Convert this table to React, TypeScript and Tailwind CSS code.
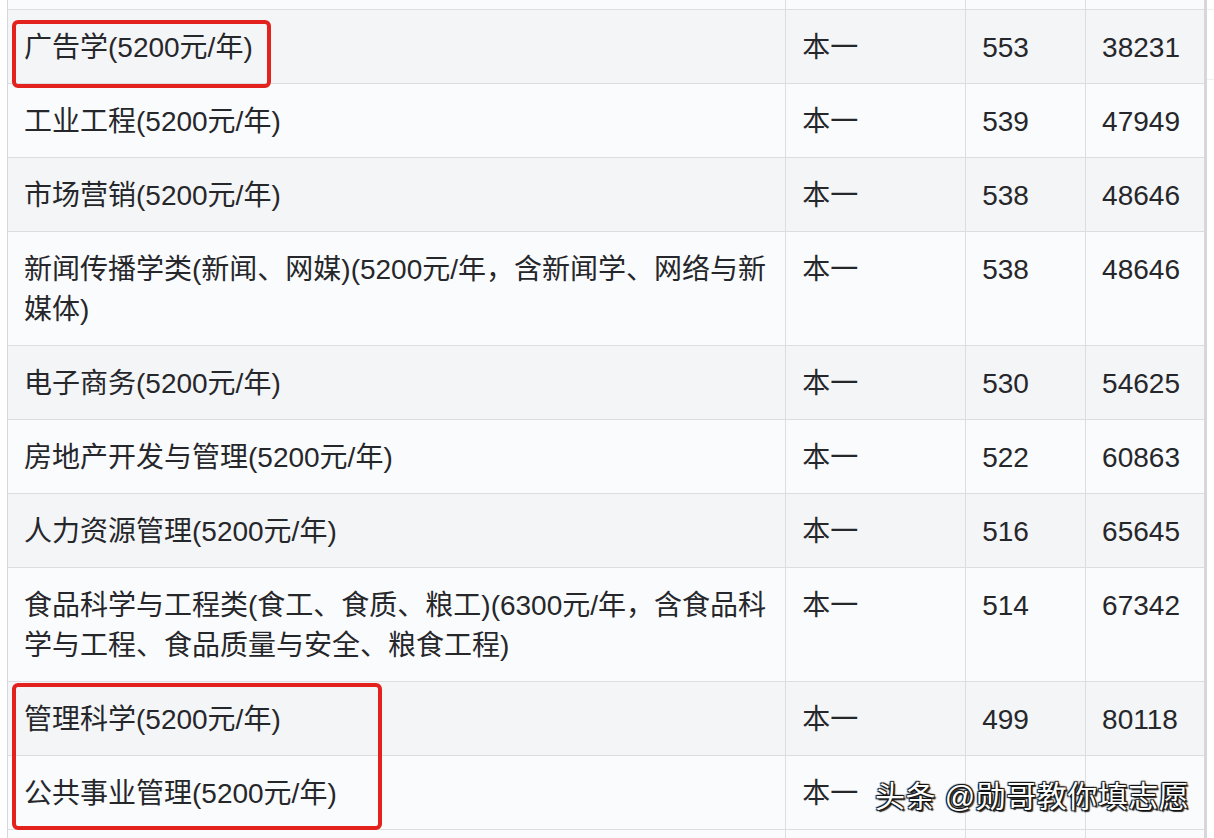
import React from 'react'

type Row = { name: string; batch: string; score: string; rank: string }

const rows: Row[] = [
  { name: '广告学(5200元/年)', batch: '本一', score: '553', rank: '38231' },
  { name: '工业工程(5200元/年)', batch: '本一', score: '539', rank: '47949' },
  { name: '市场营销(5200元/年)', batch: '本一', score: '538', rank: '48646' },
  { name: '新闻传播学类(新闻、网媒)(5200元/年，含新闻学、网络与新媒体)', batch: '本一', score: '538', rank: '48646' },
  { name: '电子商务(5200元/年)', batch: '本一', score: '530', rank: '54625' },
  { name: '房地产开发与管理(5200元/年)', batch: '本一', score: '522', rank: '60863' },
  { name: '人力资源管理(5200元/年)', batch: '本一', score: '516', rank: '65645' },
  { name: '食品科学与工程类(食工、食质、粮工)(6300元/年，含食品科学与工程、食品质量与安全、粮食工程)', batch: '本一', score: '514', rank: '67342' },
  { name: '管理科学(5200元/年)', batch: '本一', score: '499', rank: '80118' },
  { name: '公共事业管理(5200元/年)', batch: '本一', score: '', rank: '' },
]

const font = { fontFamily: '"Liberation Sans", "Noto Sans CJK SC", sans-serif' }

const App = () => {
  return (
    <div className="relative w-[1214px] h-[838px] overflow-hidden bg-white text-[28px] leading-[40px] text-[#26272b]" style={font}>
      <div className="flex">
        <div className="ml-[7px] w-[1200px] border-l border-r-[3px] border-[#d6d7db]">
          {/* partial row at the top */}
          <div className="flex h-[10px] bg-[#fafbfc] border-b border-[#dcdde1]">
            <div className="w-[778px]" />
            <div className="w-[180px] border-l border-[#dcdde1]" />
            <div className="w-[120px] border-l border-[#dcdde1]" />
            <div className="w-[119px] border-l border-[#dcdde1]" />
          </div>
          {rows.map((r, i) => (
            <div
              key={i}
              className={'flex border-b border-[#dcdde1] ' + (i % 2 === 0 ? 'bg-[#f4f5f7]' : 'bg-[#fafbfc]')}
            >
              <div className="w-[778px] pl-[16px] pr-[12px] pt-[18px] pb-[15px]">{r.name}</div>
              <div className="w-[180px] border-l border-[#dcdde1] pl-[16px] pt-[18px]">{r.batch}</div>
              <div className="w-[120px] border-l border-[#dcdde1] pl-[16px] pt-[18px]">{r.score}</div>
              <div className="w-[119px] border-l border-[#dcdde1] pl-[16px] pt-[18px]">{r.rank}</div>
            </div>
          ))}
          <div className="flex h-[20px] bg-[#fafbfc]">
            <div className="w-[778px]" />
            <div className="w-[180px] border-l border-[#dcdde1]" />
            <div className="w-[120px] border-l border-[#dcdde1]" />
            <div className="w-[119px] border-l border-[#dcdde1]" />
          </div>
        </div>
        <div className="flex-1 bg-white">
          <div className="h-[10px] border-b border-[#eeeff1]" />
          <div className="h-[70px] border-b border-[#eeeff1]" />
        </div>
      </div>

      {/* red highlight boxes */}
      <div className="absolute left-[12px] top-[20px] w-[259px] h-[68px] border-4 border-[#e3221e] rounded-[6px]" />
      <div className="absolute left-[12px] top-[683px] w-[370px] h-[147px] border-4 border-[#e3221e] rounded-[6px]" />

      {/* watermark */}
      <div className="absolute left-[875px] top-[776px] text-[30px] leading-[42px] text-white tracking-[0.5px] [text-shadow:1px_1px_1px_#111,-1px_-1px_1px_#111,1px_-1px_1px_#111,-1px_1px_1px_#111,2px_2px_1px_#333]">
        头条 @勋哥教你填志愿
      </div>
    </div>
  )
}

export default App
